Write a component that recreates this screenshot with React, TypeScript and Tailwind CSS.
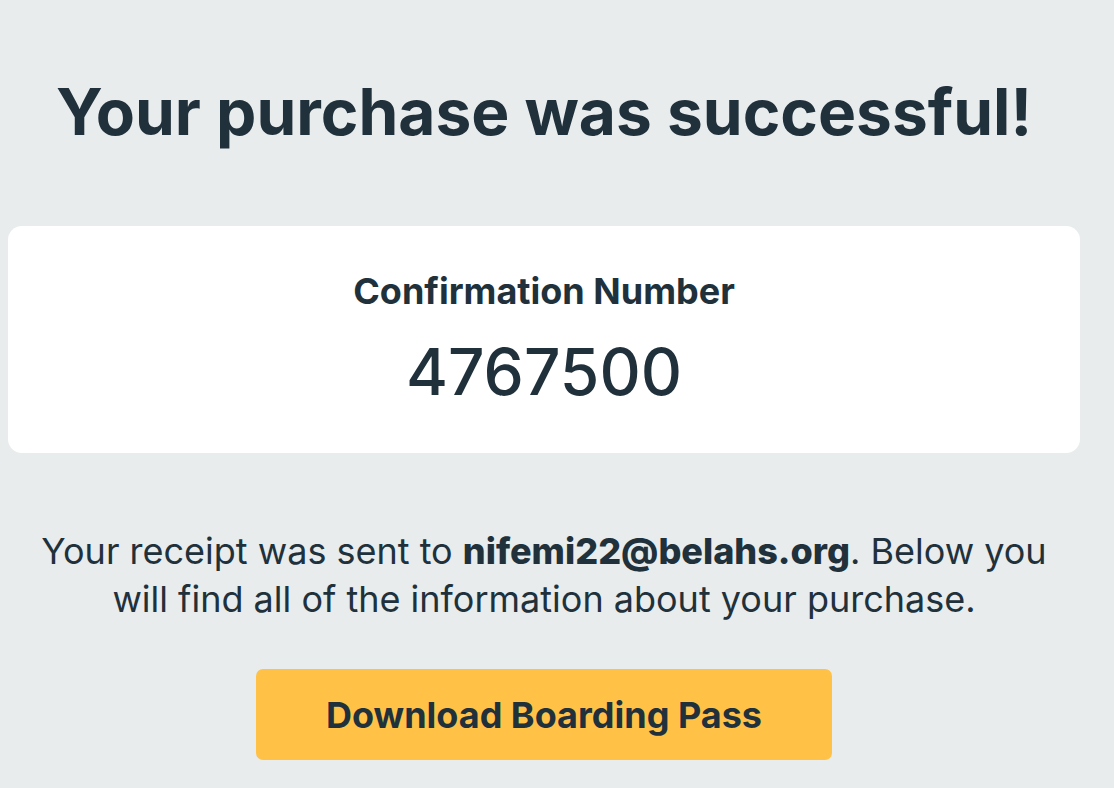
export default function App() {
  return (
    <div className="min-h-screen w-full bg-[#e8eced] font-['Inter',sans-serif] text-[#21313c]">
      <div className="w-[1072px] ml-2 flex flex-col items-center">
        <h1 className="mt-[72px] text-[64px] leading-[80px] font-bold text-center">
          Your purchase was successful!
        </h1>

        <section className="mt-[74px] w-full h-[227px] bg-white rounded-[14px] flex flex-col items-center pt-[43px]">
          <h2 className="text-[36px] leading-[44px] font-bold">
            Confirmation Number
          </h2>
          <p className="mt-[21px] text-[64px] leading-[76px] font-medium">
            4767500
          </p>
        </section>

        <p className="mt-[74px] w-[1030px] text-[36px] leading-[48px] text-center">
          Your receipt was sent to <span className="font-extrabold">nifemi22@belahs.org</span>. Below you will find all of the information about your purchase.
        </p>

        <button
          type="button"
          className="mt-[46px] w-[576px] h-[91px] bg-[#ffc247] rounded-[7px] text-[36px] font-bold text-[#21313c]"
        >
          Download Boarding Pass
        </button>
      </div>
    </div>
  );
}
